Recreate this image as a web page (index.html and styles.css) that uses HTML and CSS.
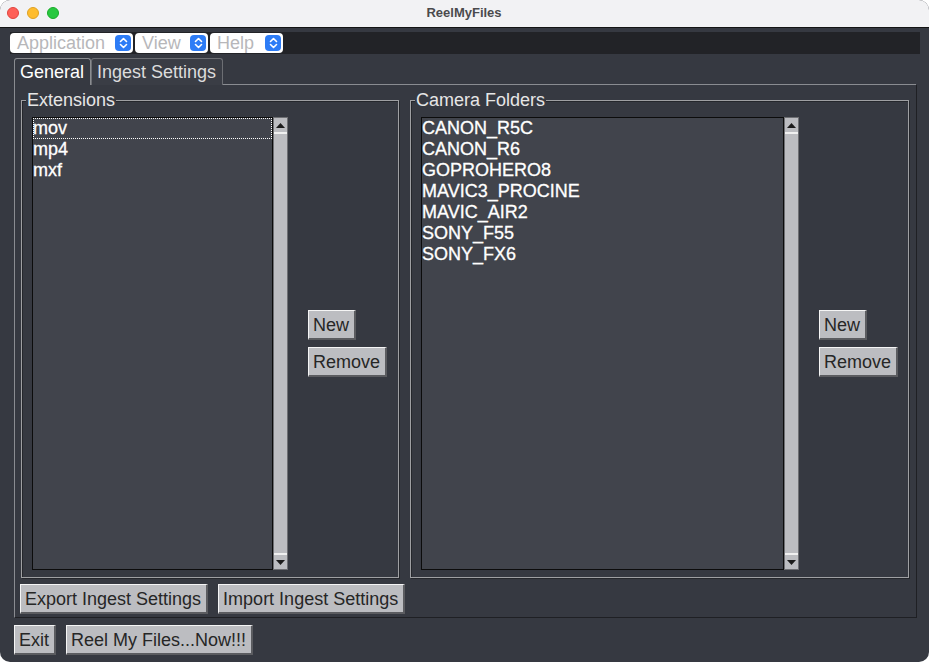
FILE: index.html
```html
<!DOCTYPE html>
<html>
<head>
<meta charset="utf-8">
<title>ReelMyFiles</title>
<link rel="stylesheet" href="styles.css">
</head>
<body>
<div class="window">
  <div class="titlebar">
    <div class="lights">
      <span class="light red"></span>
      <span class="light yellow"></span>
      <span class="light green"></span>
    </div>
    <div class="title">ReelMyFiles</div>
  </div>

  <div class="menubar">
    <div class="select sel-app"><span class="sel-text">Application</span><span class="stepper"><svg width="9" height="12" viewBox="0 0 9 12"><path d="M1.5 4.5 L4.5 1.5 L7.5 4.5 M1.5 7.5 L4.5 10.5 L7.5 7.5" fill="none" stroke="#fff" stroke-width="1.6" stroke-linecap="round" stroke-linejoin="round"/></svg></span></div>
    <div class="select sel-view"><span class="sel-text">View</span><span class="stepper"><svg width="9" height="12" viewBox="0 0 9 12"><path d="M1.5 4.5 L4.5 1.5 L7.5 4.5 M1.5 7.5 L4.5 10.5 L7.5 7.5" fill="none" stroke="#fff" stroke-width="1.6" stroke-linecap="round" stroke-linejoin="round"/></svg></span></div>
    <div class="select sel-help"><span class="sel-text">Help</span><span class="stepper"><svg width="9" height="12" viewBox="0 0 9 12"><path d="M1.5 4.5 L4.5 1.5 L7.5 4.5 M1.5 7.5 L4.5 10.5 L7.5 7.5" fill="none" stroke="#fff" stroke-width="1.6" stroke-linecap="round" stroke-linejoin="round"/></svg></span></div>
  </div>

  <div class="tabs">
    <div class="tab active">General</div>
    <div class="tab">Ingest Settings</div>
    <div class="tab-fill"></div>
  </div>

  <div class="panel">
    <div class="groups">
      <div class="group group-ext">
        <span class="legend">Extensions</span>
        <div class="group-body">
          <div class="listwrap">
            <div class="list">
              <div class="item focus">mov</div>
              <div class="item">mp4</div>
              <div class="item">mxf</div>
            </div>
            <div class="scrollbar">
              <div class="sb-btn sb-up"><svg width="9" height="5" viewBox="0 0 9 5"><path d="M0 5 L4.5 0 L9 5 Z" fill="#1c1c1c"/></svg></div>
              <div class="sb-track"></div>
              <div class="sb-btn sb-down"><svg width="9" height="5" viewBox="0 0 9 5"><path d="M0 0 L9 0 L4.5 5 Z" fill="#1c1c1c"/></svg></div>
            </div>
          </div>
          <div class="side-buttons">
            <button class="btn">New</button>
            <button class="btn">Remove</button>
          </div>
        </div>
      </div>

      <div class="group group-cam">
        <span class="legend">Camera Folders</span>
        <div class="group-body">
          <div class="listwrap">
            <div class="list">
              <div class="item">CANON_R5C</div>
              <div class="item">CANON_R6</div>
              <div class="item">GOPROHERO8</div>
              <div class="item">MAVIC3_PROCINE</div>
              <div class="item">MAVIC_AIR2</div>
              <div class="item">SONY_F55</div>
              <div class="item">SONY_FX6</div>
            </div>
            <div class="scrollbar">
              <div class="sb-btn sb-up"><svg width="9" height="5" viewBox="0 0 9 5"><path d="M0 5 L4.5 0 L9 5 Z" fill="#1c1c1c"/></svg></div>
              <div class="sb-track"></div>
              <div class="sb-btn sb-down"><svg width="9" height="5" viewBox="0 0 9 5"><path d="M0 0 L9 0 L4.5 5 Z" fill="#1c1c1c"/></svg></div>
            </div>
          </div>
          <div class="side-buttons">
            <button class="btn">New</button>
            <button class="btn">Remove</button>
          </div>
        </div>
      </div>
    </div>

    <div class="panel-buttons">
      <button class="btn">Export Ingest Settings</button>
      <button class="btn">Import Ingest Settings</button>
    </div>
  </div>

  <div class="footer">
    <button class="btn">Exit</button>
    <button class="btn">Reel My Files...Now!!!</button>
  </div>
</div>
</body>
</html>
```

FILE: styles.css
```css
* { box-sizing: border-box; }

html, body {
  margin: 0;
  padding: 0;
  width: 929px;
  height: 662px;
  overflow: hidden;
  background: #ffffff;
}

body {
  font-family: "Liberation Sans", Arial, sans-serif;
  font-size: 18px;
}

.window {
  width: 929px;
  height: 662px;
  background: #363941;
  border-radius: 10px;
  overflow: hidden;
  display: flex;
  flex-direction: column;
}

/* Title bar */
.titlebar {
  height: 28px;
  flex: none;
  background: #f2f2f4;
  border-bottom: 1px solid #141414;
  display: flex;
  align-items: center;
  position: relative;
}

.lights {
  display: flex;
  gap: 8px;
  padding-left: 7px;
  margin-top: -2px;
}

.light {
  width: 12px;
  height: 12px;
  border-radius: 50%;
  display: block;
}
.light.red { background: #fe5f57; border: 0.5px solid #e0443e; }
.light.yellow { background: #febc2e; border: 0.5px solid #dea123; }
.light.green { background: #28c840; border: 0.5px solid #1aab29; }

.title {
  flex: 1;
  text-align: center;
  font-size: 13px;
  font-weight: bold;
  color: #4a4a4c;
  margin-left: -60px;
  margin-top: -2px;
}

/* Menu bar */
.menubar {
  flex: none;
  margin: 4px 9px 0 10px;
  height: 22px;
  background: #222327;
  display: flex;
  align-items: flex-start;
  gap: 2px;
  padding-top: 1px;
}

.select {
  height: 20px;
  background: #ffffff;
  border-radius: 4px;
  display: flex;
  align-items: center;
  justify-content: space-between;
  padding: 0 2px 0 7px;
}

.sel-app { width: 123px; }
.sel-view { width: 73px; }
.sel-help { width: 73px; }

.sel-text {
  color: #b7b7ba;
  font-size: 18px;
  line-height: 20px;
}

.stepper {
  width: 16px;
  height: 16px;
  border-radius: 4px;
  background: #2d7cf6;
  display: flex;
  align-items: center;
  justify-content: center;
}

/* Tabs */
.tabs {
  flex: none;
  display: flex;
  margin: 4px 13px 0 14px;
  height: 27px;
}

.tab {
  height: 27px;
  padding: 0 6px 0 5px;
  line-height: 26px;
  color: #dcdcdc;
  border: 1px solid #6c6e73;
  border-bottom: none;
  border-radius: 3px 3px 0 0;
  background: #3a3d45;
}

.tab.active {
  color: #ffffff;
  background: #363941;
  border-color: #8a8c90;
}

.tab-fill {
  flex: 1;
  border-bottom: 1px solid #8a8c91;
}

/* Panel */
.panel {
  flex: none;
  margin-left: 14px;
  width: 903px;
  height: 533px;
  border-left: 1px solid #8a8c91;
  border-right: 1px solid #1f2024;
  border-bottom: 1px solid #1f2024;
  padding: 15px 6px 0 6px;
  display: flex;
  flex-direction: column;
}

.groups {
  display: flex;
  gap: 11px;
  height: 478px;
}

.group {
  position: relative;
  height: 478px;
  border: 1px solid #9fa0a3;
  box-shadow: inset 1px 1px 0 #25272c, 1px 1px 0 #25272c;
  padding: 16px 10px 7px 10px;
}

.group-ext { width: 378px; padding-right: 12px; }
.group-cam { width: 499px; }

.legend {
  position: absolute;
  top: -11px;
  left: 4px;
  padding: 0 1px;
  background: #363941;
  color: #e6e6e6;
  line-height: 20px;
}

.group-body {
  display: flex;
  align-items: center;
  gap: 20px;
  height: 100%;
}

.listwrap {
  flex: 1;
  display: flex;
  height: 100%;
}

.list {
  flex: 1;
  background: #41444c;
  border: 1px solid #0c0c0c;
  padding: 0;
}

.item {
  height: 21px;
  line-height: 21px;
  color: #ffffff;
  padding-left: 0;
  white-space: nowrap;
  -webkit-text-stroke: 0.3px #ffffff;
}

.item.focus {
  outline: 1px dotted #ffffff;
  outline-offset: -1px;
  height: 21px;
}

.scrollbar {
  width: 15px;
  flex: none;
  display: flex;
  flex-direction: column;
  background: #bcbdc1;
  border: 1px solid #6e6f73;
}

.sb-btn {
  height: 14px;
  flex: none;
  display: flex;
  align-items: center;
  justify-content: center;
  background: #bcbdc1;
}

.sb-up { border-bottom: 2px solid #f0f0f0; height: 16px; }
.sb-down { border-top: 2px solid #f0f0f0; height: 16px; }

.sb-track { flex: 1; }

.side-buttons {
  display: flex;
  flex-direction: column;
  align-items: flex-start;
  gap: 7px;
  flex: none;
  width: 78px;
  margin-top: 0;
}

.group-cam .side-buttons { width: 79px; }

/* Buttons */
.btn {
  font-family: "Liberation Sans", Arial, sans-serif;
  font-size: 18px;
  color: #262626;
  background: #bcbdc1;
  height: 30px;
  padding: 0 5px 0 4px;
  line-height: 26px;
  border-style: solid;
  border-width: 1px 2px 2px 1px;
  border-color: #f5f5f5 #5b5c60 #5b5c60 #f5f5f5;
  border-radius: 0;
  margin: 0;
  white-space: nowrap;
}

.panel-buttons {
  display: flex;
  gap: 10px;
  margin-top: 6px;
  margin-left: -1px;
}

.footer {
  display: flex;
  gap: 10px;
  margin: 7px 0 0 14px;
}
```
